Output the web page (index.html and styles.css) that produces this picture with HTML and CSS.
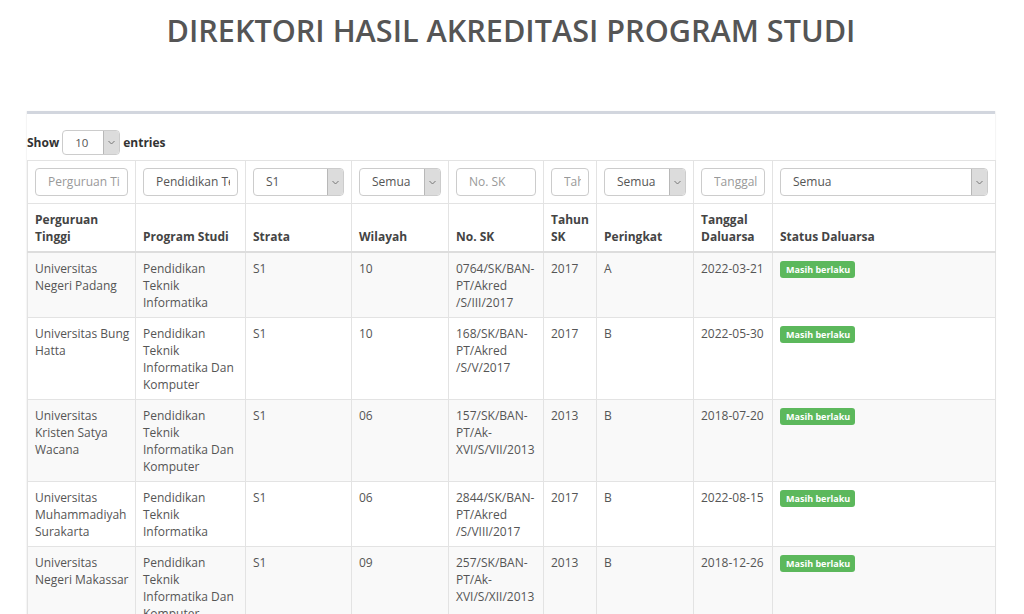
FILE: index.html
```html
<!DOCTYPE html>
<html lang="id">
<head>
<meta charset="utf-8">
<title>Direktori Hasil Akreditasi Program Studi</title>
<link rel="stylesheet" href="styles.css">
</head>
<body>
<h1 class="page-title">DIREKTORI HASIL AKREDITASI PROGRAM STUDI</h1>
<div class="box">
  <div class="length">
    <span>Show</span>
    <div class="sel sel-len"><span class="sel-val">10</span><span class="sel-btn"><svg width="7" height="5" viewBox="0 0 7 5"><path d="M0.5 1 L3.5 4 L6.5 1" fill="none" stroke="#777" stroke-width="1"/></svg></span></div>
    <span>entries</span>
  </div>
  <table class="grid">
    <colgroup>
      <col style="width:108px"><col style="width:110px"><col style="width:106px"><col style="width:97px"><col style="width:95px"><col style="width:53px"><col style="width:97px"><col style="width:79px"><col style="width:223px">
    </colgroup>
    <thead>
      <tr class="filters">
        <td><div class="inp ph"><span>Perguruan Tinggi</span></div></td>
        <td><div class="inp"><span>Pendidikan Teknik</span></div></td>
        <td><div class="sel"><span class="sel-val">S1</span><span class="sel-btn"><svg width="7" height="5" viewBox="0 0 7 5"><path d="M0.5 1 L3.5 4 L6.5 1" fill="none" stroke="#777" stroke-width="1"/></svg></span></div></td>
        <td><div class="sel"><span class="sel-val">Semua</span><span class="sel-btn"><svg width="7" height="5" viewBox="0 0 7 5"><path d="M0.5 1 L3.5 4 L6.5 1" fill="none" stroke="#777" stroke-width="1"/></svg></span></div></td>
        <td><div class="inp ph"><span>No. SK</span></div></td>
        <td><div class="inp ph"><span>Tahun SK</span></div></td>
        <td><div class="sel"><span class="sel-val">Semua</span><span class="sel-btn"><svg width="7" height="5" viewBox="0 0 7 5"><path d="M0.5 1 L3.5 4 L6.5 1" fill="none" stroke="#777" stroke-width="1"/></svg></span></div></td>
        <td><div class="inp ph"><span>Tanggal Daluarsa</span></div></td>
        <td><div class="sel"><span class="sel-val">Semua</span><span class="sel-btn"><svg width="7" height="5" viewBox="0 0 7 5"><path d="M0.5 1 L3.5 4 L6.5 1" fill="none" stroke="#777" stroke-width="1"/></svg></span></div></td>
      </tr>
      <tr class="heads">
        <th>Perguruan Tinggi</th>
        <th>Program Studi</th>
        <th>Strata</th>
        <th>Wilayah</th>
        <th>No. SK</th>
        <th>Tahun SK</th>
        <th>Peringkat</th>
        <th>Tanggal Daluarsa</th>
        <th>Status Daluarsa</th>
      </tr>
    </thead>
    <tbody>
      <tr>
        <td>Universitas Negeri Padang</td>
        <td>Pendidikan Teknik Informatika</td>
        <td>S1</td>
        <td>10</td>
        <td>0764/SK/BAN-PT/Akred<wbr>/S/III/2017</td>
        <td>2017</td>
        <td>A</td>
        <td>2022-03-21</td>
        <td><span class="label">Masih berlaku</span></td>
      </tr>
      <tr>
        <td>Universitas Bung Hatta</td>
        <td>Pendidikan Teknik Informatika Dan Komputer</td>
        <td>S1</td>
        <td>10</td>
        <td>168/SK/BAN-PT/Akred<wbr>/S/V/2017</td>
        <td>2017</td>
        <td>B</td>
        <td>2022-05-30</td>
        <td><span class="label">Masih berlaku</span></td>
      </tr>
      <tr>
        <td>Universitas Kristen Satya Wacana</td>
        <td>Pendidikan Teknik Informatika Dan Komputer</td>
        <td>S1</td>
        <td>06</td>
        <td>157/SK/BAN-PT/Ak-XVI/S/VII/2013</td>
        <td>2013</td>
        <td>B</td>
        <td>2018-07-20</td>
        <td><span class="label">Masih berlaku</span></td>
      </tr>
      <tr>
        <td>Universitas Muhammadiyah Surakarta</td>
        <td>Pendidikan Teknik Informatika</td>
        <td>S1</td>
        <td>06</td>
        <td>2844/SK/BAN-PT/Akred<wbr>/S/VIII/2017</td>
        <td>2017</td>
        <td>B</td>
        <td>2022-08-15</td>
        <td><span class="label">Masih berlaku</span></td>
      </tr>
      <tr>
        <td>Universitas Negeri Makassar</td>
        <td>Pendidikan Teknik Informatika Dan Komputer</td>
        <td>S1</td>
        <td>09</td>
        <td>257/SK/BAN-PT/Ak-XVI/S/XII/2013</td>
        <td>2013</td>
        <td>B</td>
        <td>2018-12-26</td>
        <td><span class="label">Masih berlaku</span></td>
      </tr>
      <tr>
        <td>Universitas Negeri Malang</td>
        <td>Pendidikan Teknik Informatika</td>
        <td>S1</td>
        <td>07</td>
        <td>0412/SK/BAN-PT/Akred<wbr>/S/II/2017</td>
        <td>2017</td>
        <td>B</td>
        <td>2022-02-14</td>
        <td><span class="label">Masih berlaku</span></td>
      </tr>
    </tbody>
  </table>
</div>
</body>
</html>
```
FILE: styles.css
```css
html, body {
  margin: 0;
  padding: 0;
  background: #fff;
}
body {
  font-family: "Open Sans", "Liberation Sans", sans-serif;
  font-size: 12px;
  line-height: 17px;
  color: #555;
  padding: 0 29px 0 27px;
}
.page-title {
  margin: 14px 0 64px;
  text-align: center;
  font-size: 30.6px;
  line-height: 33px;
  font-weight: 600;
  color: #555;
}
.box {
  border-top: 3px solid #d2d6de;
  background: #fff;
  box-shadow: 0 1px 1px rgba(0,0,0,0.06), 1px 0 1px rgba(0,0,0,0.03), -1px 0 1px rgba(0,0,0,0.03);
  padding-top: 16px;
}
.length {
  display: flex;
  align-items: center;
  gap: 3px;
  font-weight: 700;
  color: #333;
  margin-bottom: 5px;
}
.sel {
  display: flex;
  height: 28px;
  box-sizing: border-box;
  border: 1px solid #ccc;
  border-radius: 4px;
  background: #fff;
  overflow: hidden;
  font-weight: 400;
  color: #555;
}
.sel-val {
  flex: 1;
  padding-left: 12px;
  line-height: 26px;
  white-space: nowrap;
  overflow: hidden;
}
.sel-btn {
  width: 15px;
  display: flex;
  align-items: center;
  justify-content: center;
  background: #dcdcdc;
  border-left: 1px solid #b8b8b8;
}
.sel-len {
  width: 58px;
  height: 25px;
}
.sel-len .sel-val {
  line-height: 23px;
  padding-left: 12px;
  font-size: 11.5px;
}
.grid {
  width: 100%;
  table-layout: fixed;
  border-collapse: collapse;
}
.grid td, .grid th {
  border: 1px solid #e3e3e3;
  padding: 7px 4px 6px 7px;
  vertical-align: top;
  text-align: left;
}
.grid th {
  vertical-align: bottom;
  font-weight: 700;
  color: #444;
  border-bottom: 2px solid #ddd;
}
.filters td {
  padding: 7px;
}
.inp {
  height: 28px;
  box-sizing: border-box;
  border: 1px solid #ccc;
  border-radius: 4px;
  padding: 0 7px 0 12px;
  line-height: 26px;
  color: #555;
}
.inp span {
  display: block;
  white-space: nowrap;
  overflow: hidden;
}
.inp.ph {
  color: #999;
}
.grid tbody tr:nth-child(odd) td {
  background: #f9f9f9;
}
.label {
  display: inline-block;
  vertical-align: top;
  margin-top: 1px;
  background: #5cb85c;
  color: #fff;
  font-size: 9px;
  font-weight: 700;
  line-height: 11px;
  padding: 3px 5px 3px 6px;
  border-radius: 3px;
  white-space: nowrap;
}
```
